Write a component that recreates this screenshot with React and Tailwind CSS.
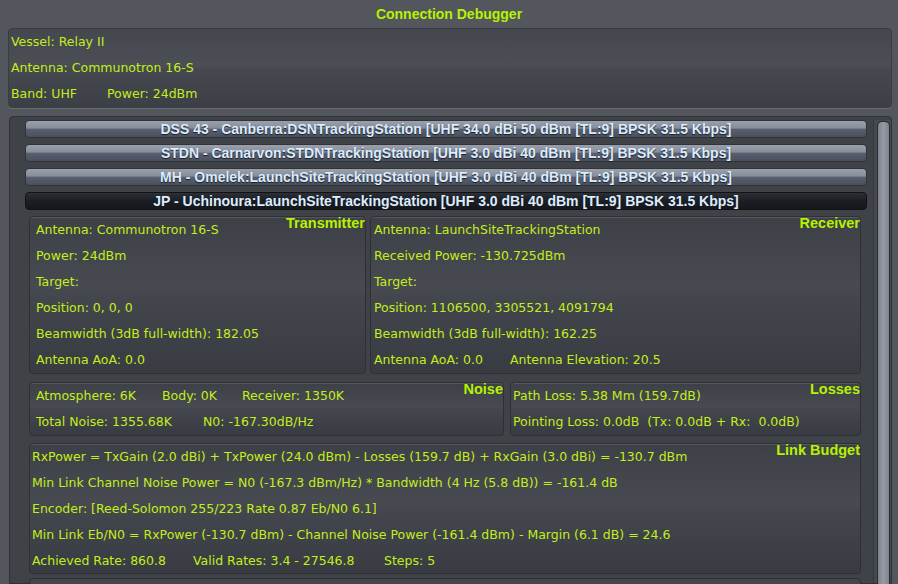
import React from "react";

const GREEN = "text-[#c2ee1c]";

const txLines = [
  "Antenna: Communotron 16-S",
  "Power: 24dBm",
  "Target:",
  "Position: 0, 0, 0",
  "Beamwidth (3dB full-width): 182.05",
  "Antenna AoA: 0.0",
];

const rxLines = [
  "Antenna: LaunchSiteTrackingStation",
  "Received Power: -130.725dBm",
  "Target:",
  "Position: 1106500, 3305521, 4091794",
  "Beamwidth (3dB full-width): 162.25",
];

const stations = [
  "DSS 43 - Canberra:DSNTrackingStation [UHF 34.0 dBi 50 dBm [TL:9] BPSK 31.5 Kbps]",
  "STDN - Carnarvon:STDNTrackingStation [UHF 3.0 dBi 40 dBm [TL:9] BPSK 31.5 Kbps]",
  "MH - Omelek:LaunchSiteTrackingStation [UHF 3.0 dBi 40 dBm [TL:9] BPSK 31.5 Kbps]",
];

function Line({ children, className = "" }) {
  return (
    <div className={`h-[26px] leading-[26px] whitespace-nowrap ${className}`}>{children}</div>
  );
}

function Box({ label, className = "", children }) {
  return (
    <div
      className={`relative shrink-0 rounded-[4px] border border-[#2e3035] bg-[linear-gradient(180deg,#3d4046_0%,#474a51_45%,#43464c_52%,#383b41_100%)] shadow-[inset_0_1px_0_#55585e] ${className}`}
    >
      <div className="absolute right-0 top-[-4px] font-['Liberation_Sans',sans-serif] text-[14.5px] font-bold text-[#b6f200]">
        {label}
      </div>
      {children}
    </div>
  );
}

function StationButton({ text, active }) {
  return (
    <div
      className={
        active
          ? "h-[18px] shrink-0 rounded-[4px] border border-[#101216] bg-[linear-gradient(180deg,#2b2f36_0%,#1b1e23_50%,#15171b_100%)] flex items-center justify-center"
          : "h-[18px] shrink-0 rounded-[4px] border border-[#30333a] bg-[linear-gradient(180deg,#9aa0ab_0%,#878d99_45%,#5a6070_50%,#4a505d_100%)] flex items-center justify-center"
      }
    >
      <span className="font-['Liberation_Sans',sans-serif] text-[14px] font-bold text-[#dcecff] [text-shadow:0_1px_1px_#1a1c20] whitespace-nowrap">
        {text}
      </span>
    </div>
  );
}

export default function App() {
  return (
    <div className={`w-[898px] h-[584px] overflow-hidden flex flex-col bg-[#53565c] font-['DejaVu_Sans',sans-serif] text-[12.5px] ${GREEN}`}>
      {/* title */}
      <div className="h-[28px] shrink-0 flex items-center justify-center font-['Liberation_Sans',sans-serif] text-[14px] font-bold text-[#b6f200]">
        Connection Debugger
      </div>

      {/* vessel header */}
      <div className="ml-[8px] mr-[6px] h-[80px] shrink-0 rounded-[4px] border border-[#3a3d42] bg-[linear-gradient(180deg,#44474d_0%,#4b4e55_48%,#45484e_52%,#3c3f45_100%)] px-[2px] shadow-[0_1px_0_#6a6d73]">
        <Line>Vessel: Relay II</Line>
        <Line>Antenna: Communotron 16-S</Line>
        <Line className="flex">
          <span className="w-[96px]">Band: UHF</span>
          <span>Power: 24dBm</span>
        </Line>
      </div>

      {/* scroll panel */}
      <div className="mt-[8px] ml-[9px] mr-[6px] flex-1 min-h-0 flex rounded-t-[4px] border border-[#2f3136] bg-[#3f4247] pl-[15px] pt-[3px]">
        <div className="flex-1 flex flex-col">
          <div className="flex flex-col gap-[6px]">
            {stations.map((s) => (
              <StationButton key={s} text={s} />
            ))}
            <StationButton active text="JP - Uchinoura:LaunchSiteTrackingStation [UHF 3.0 dBi 40 dBm [TL:9] BPSK 31.5 Kbps]" />
          </div>

          <div className="ml-[4px] mr-[6px] mt-[6px] flex flex-col">
            {/* transmitter / receiver */}
            <div className="flex gap-[4px]">
              <Box label="Transmitter" className="w-[337px] h-[158px] pl-[6px]">
                {txLines.map((l) => (
                  <Line key={l}>{l}</Line>
                ))}
              </Box>
              <Box label="Receiver" className="flex-1 h-[158px] pl-[3px]">
                {rxLines.map((l) => (
                  <Line key={l}>{l}</Line>
                ))}
                <Line className="flex">
                  <span className="w-[136px]">Antenna AoA: 0.0</span>
                  <span>Antenna Elevation: 20.5</span>
                </Line>
              </Box>
            </div>

            {/* noise / losses */}
            <div className="flex gap-[6px] mt-[8px]">
              <Box label="Noise" className="w-[475px] h-[54px] pl-[6px]">
                <Line className="flex">
                  <span className="w-[126px]">Atmosphere: 6K</span>
                  <span className="w-[80px]">Body: 0K</span>
                  <span>Receiver: 1350K</span>
                </Line>
                <Line className="flex">
                  <span className="w-[167px]">Total Noise: 1355.68K</span>
                  <span>N0: -167.30dB/Hz</span>
                </Line>
              </Box>
              <Box label="Losses" className="flex-1 h-[54px] pl-[2px]">
                <Line>Path Loss: 5.38 Mm (159.7dB)</Line>
                <Line className="whitespace-pre">Pointing Loss: 0.0dB  (Tx: 0.0dB + Rx:  0.0dB)</Line>
              </Box>
            </div>

            {/* link budget */}
            <Box label="Link Budget" className="mt-[7px] h-[131px] pl-[2px]">
              <Line>RxPower = TxGain (2.0 dBi) + TxPower (24.0 dBm) - Losses (159.7 dB) + RxGain (3.0 dBi) = -130.7 dBm</Line>
              <Line>Min Link Channel Noise Power = N0 (-167.3 dBm/Hz) * Bandwidth (4 Hz (5.8 dB)) = -161.4 dB</Line>
              <Line>Encoder: [Reed-Solomon 255/223 Rate 0.87 Eb/N0 6.1]</Line>
              <Line>Min Link Eb/N0 = RxPower (-130.7 dBm) - Channel Noise Power (-161.4 dBm) - Margin (6.1 dB) = 24.6</Line>
              <Line className="flex">
                <span className="w-[161px]">Achieved Rate: 860.8</span>
                <span className="w-[191px]">Valid Rates: 3.4 - 27546.8</span>
                <span>Steps: 5</span>
              </Line>
            </Box>
            <div className="mt-[4px] h-[20px] shrink-0 rounded-t-[4px] border border-[#2e3035] bg-[#43464c]" />
          </div>
        </div>

        {/* scrollbar */}
        <div className="w-[18px] ml-[6px] pt-[1px] pr-[1px] border-l border-[#34373c] bg-[#45484e]">
          <div className="ml-[3px] h-[480px] w-[13px] rounded-[5px] border border-[#2a2c30] bg-[linear-gradient(90deg,#7d828c,#959aa4_50%,#7d828c)]" />
        </div>
      </div>
    </div>
  );
}
